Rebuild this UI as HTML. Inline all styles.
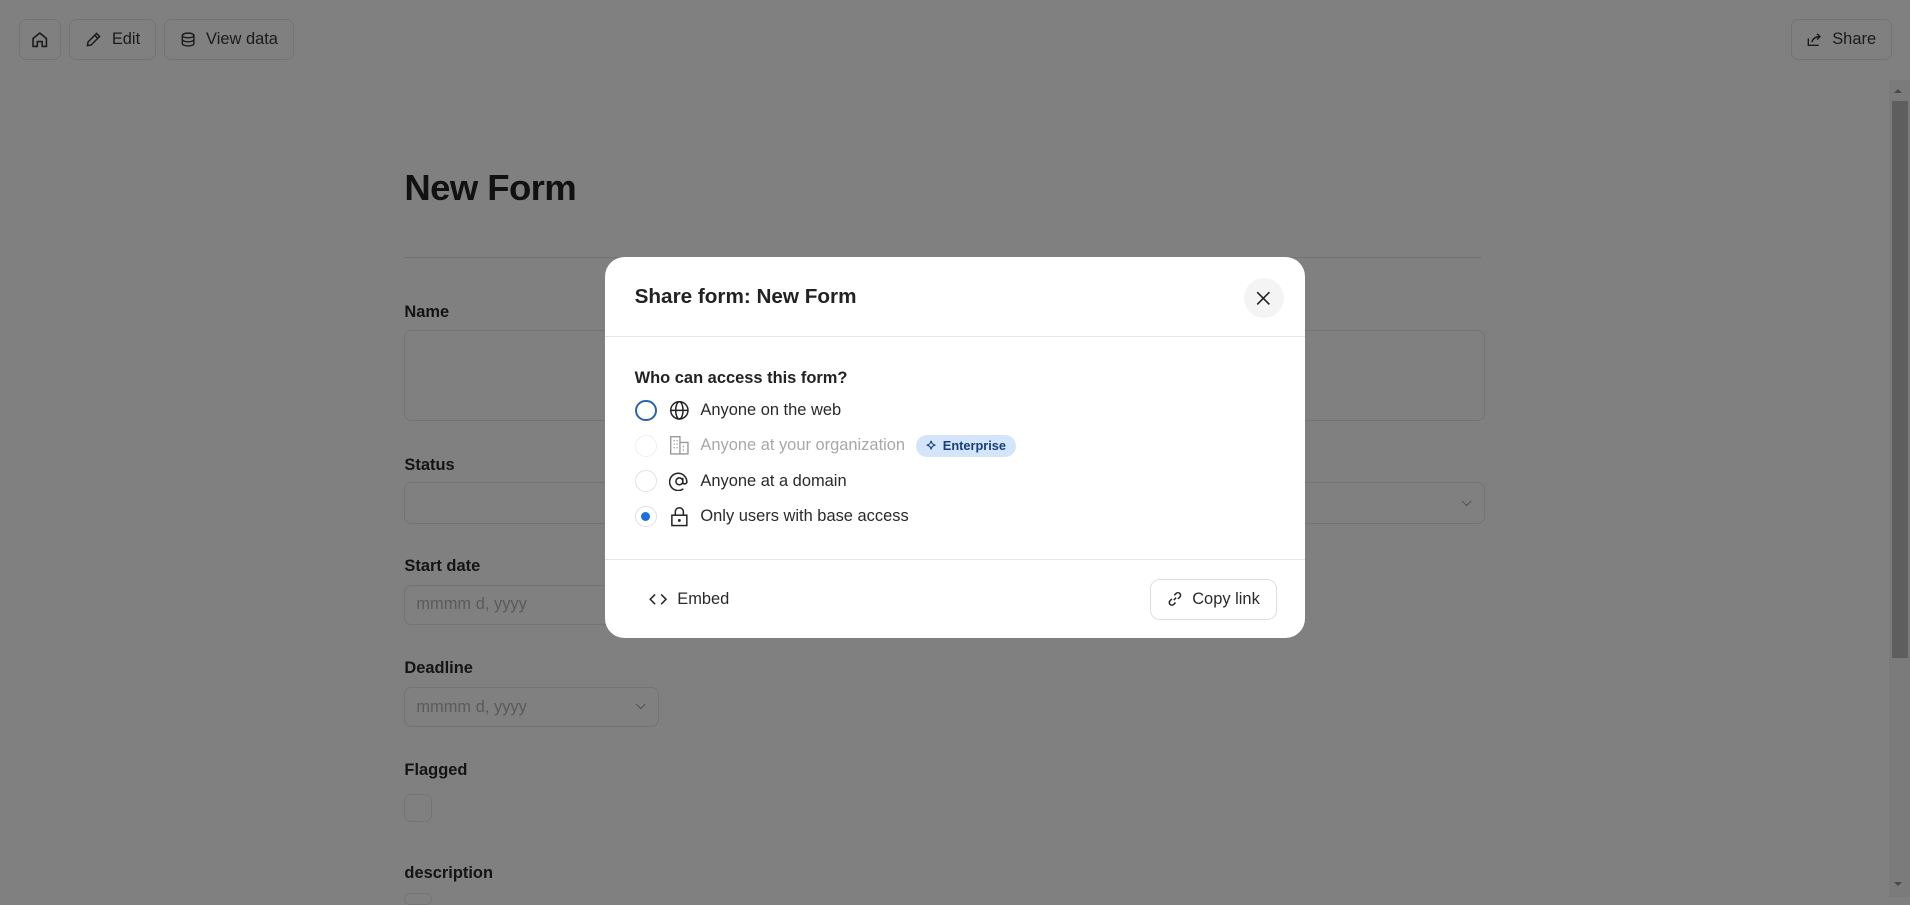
<!DOCTYPE html>
<html><head><meta charset="utf-8"><style>
html{zoom:1.21811}
*{box-sizing:border-box;margin:0;padding:0}
body{width:1568px;height:736px;overflow:hidden;background:#808080;font-family:"Liberation Sans",sans-serif;color:#141414;position:relative}
.a{position:absolute}
.btn{position:absolute;top:16px;height:33px;border:1px solid #747474;border-radius:6px;display:flex;align-items:center;gap:8px;padding:0 12px;font-size:13.5px;color:#1a1a1a;white-space:nowrap}
.lbl{position:absolute;left:332px;font-size:13.5px;font-weight:bold;color:#141414}
.inp{position:absolute;left:332px;border:1px solid #747474;border-radius:6px;font-size:13.5px;color:#5a5a5a;padding-left:9px;display:flex;align-items:center}
.modal{position:absolute;left:497px;top:211px;width:574px;height:313px;background:#fff;border-radius:16px}
.opt{position:absolute;left:24px;display:flex;align-items:center;font-size:13.5px;color:#2a2a2a;height:20px;white-space:nowrap}
.rad{width:18px;height:18px;border-radius:50%;border:1.5px solid #e1e1e1;margin-right:10px;display:flex;align-items:center;justify-content:center}
.opt svg{margin-right:9px}
</style></head><body>
<div class="btn" style="left:16px;width:34px;padding:0;justify-content:center"><svg width="16" height="16" viewBox="0 0 16 16" fill="none" stroke="#1a1a1a" stroke-width="1.3"><path d="M2.5 7L8 2.5 13.5 7v6.5h-3.5v-4h-4v4H2.5z" stroke-linejoin="round"/></svg></div>
<div class="btn" style="left:57px;width:71px"><svg width="14" height="14" viewBox="0 0 14 14" fill="none" stroke="#1a1a1a" stroke-width="1.2"><path d="M2 12l.5-3L9.5 2l2.5 2.5-7 7z M8 3.5l2.5 2.5"/></svg>Edit</div>
<div class="btn" style="left:135px;width:106px"><svg width="14" height="14" viewBox="0 0 14 14" fill="none" stroke="#1a1a1a" stroke-width="1.2"><ellipse cx="7" cy="3.5" rx="5" ry="2"/><path d="M2 3.5v7c0 1.1 2.2 2 5 2s5-.9 5-2v-7M2 7c0 1.1 2.2 2 5 2s5-.9 5-2"/></svg>View data</div>
<div class="btn" style="left:1470px;width:83px"><svg width="14" height="14" viewBox="0 0 14 14" fill="none" stroke="#1a1a1a" stroke-width="1.2"><path d="M2 6v6h9M5 9c1-3 3-4.5 7-4.5M9.5 2l2.5 2.5L9.5 7"/></svg>Share</div>
<div class="a" style="left:1551px;top:66px;width:17px;height:670px;background:#7b7b7b"></div>
<div class="a" style="left:1553px;top:83px;width:13px;height:457px;background:#5e5e5e"></div>
<div class="a" style="left:1555px;top:70px;width:0;height:0;border:4px solid transparent;border-bottom:4px solid #4a4a4a"></div>
<div class="a" style="left:1555px;top:724px;width:0;height:0;border:4px solid transparent;border-top:4px solid #4a4a4a"></div>

<div class="a" style="left:332px;top:137px;font-size:30px;font-weight:bold;color:#111;letter-spacing:-0.5px">New Form</div>
<div class="a" style="left:332px;top:211px;width:885px;height:1px;background:#747474"></div>
<div class="lbl" style="top:249px">Name</div>
<div class="inp" style="top:271px;width:887px;height:75px"></div>
<div class="lbl" style="top:374px">Status</div>
<div class="inp" style="top:396px;width:887px;height:34px"><span class="a" style="right:10px;top:9px;font-size:11px;color:#333">⌵</span></div>
<div class="lbl" style="top:457px">Start date</div>
<div class="inp" style="top:480px;width:209px;height:33px">mmmm d, yyyy</div>
<div class="lbl" style="top:541px">Deadline</div>
<div class="inp" style="top:564px;width:209px;height:33px">mmmm d, yyyy<span class="a" style="right:10px;top:7px;font-size:11px;color:#333">⌵</span></div>
<div class="lbl" style="top:625px">Flagged</div>
<div class="inp" style="top:652px;width:23px;height:23px;padding:0"></div>
<div class="lbl" style="top:709px">description</div>
<div class="inp" style="top:733px;width:23px;height:10px;padding:0"></div>

<div class="modal">
<div class="a" style="left:24px;top:23px;font-size:17px;font-weight:bold;color:#222">Share form: New Form</div>
<div class="a" style="left:524px;top:17px;width:33px;height:33px;border-radius:50%;background:#f4f4f4;display:flex;align-items:center;justify-content:center"><svg width="12" height="12" viewBox="0 0 12 12" stroke="#222" stroke-width="1.3"><path d="M1 1l10 10M11 1L1 11"/></svg></div>
<div class="a" style="left:0;top:65px;width:574px;height:1px;background:#e6e6e6"></div>
<div class="a" style="left:24px;top:92px;font-size:13.5px;font-weight:bold;color:#222">Who can access this form?</div>
<div class="opt" style="top:116px"><div class="rad" style="border:2px solid #2a63ad"></div><svg width="17" height="17" viewBox="0 0 18 18" fill="none" stroke="#222" stroke-width="1.3"><circle cx="9" cy="9" r="7.5"/><ellipse cx="9" cy="9" rx="3.2" ry="7.5"/><path d="M1.5 9h15"/></svg>Anyone on the web</div>
<div class="opt" style="top:145px;color:#a8a8a8"><div class="rad" style="border-color:#efefef"></div><svg width="17" height="17" viewBox="0 0 18 18" fill="none" stroke="#999" stroke-width="1.2"><path d="M1.5 16.5V1.5h8v15M9.5 6.5h7v10M1 16.5h16M4 5h1M6.5 5h1M4 8h1M6.5 8h1M4 11h1M6.5 11h1M12 10h1M12 13h1"/></svg>Anyone at your organization<span style="margin-left:9px;background:#d3e4fb;color:#173f7a;font-size:10.5px;font-weight:bold;border-radius:9px;padding:3px 8px 3px 7px;display:flex;align-items:center;gap:4px"><svg width="11" height="11" viewBox="0 0 11 11" fill="none" stroke="#173f7a" stroke-width="1" style="margin:0"><path d="M5 1.5c.4 2.2 1.3 3.1 3.5 3.5-2.2.4-3.1 1.3-3.5 3.5-.4-2.2-1.3-3.1-3.5-3.5 2.2-.4 3.1-1.3 3.5-3.5z"/></svg>Enterprise</span></div>
<div class="opt" style="top:174px"><div class="rad"></div><svg width="17" height="17" viewBox="0 0 18 18" fill="none" stroke="#222" stroke-width="1.3"><circle cx="9" cy="9" r="3"/><path d="M12 6v4c0 1.5 2.5 1.8 3.5 0A7.5 7.5 0 1 0 12.5 15.5"/></svg>Anyone at a domain</div>
<div class="opt" style="top:203px"><div class="rad"><div style="width:8px;height:8px;border-radius:50%;background:#1a6ee0"></div></div><svg width="17" height="17" viewBox="0 0 18 18" fill="none" stroke="#222" stroke-width="1.3"><rect x="2.5" y="8" width="13" height="9"/><path d="M5.5 8V5a3.5 3.5 0 0 1 7 0v3"/><circle cx="9" cy="12.5" r=".6" fill="#222"/></svg>Only users with base access</div>
<div class="a" style="left:0;top:248px;width:574px;height:1px;background:#e6e6e6"></div>
<div class="a" style="left:36px;top:273px;font-size:13.5px;color:#2a2a2a;display:flex;align-items:center;gap:8px"><svg width="15" height="12" viewBox="0 0 15 12" fill="none" stroke="#222" stroke-width="1.2"><path d="M5 2L1 6l4 4M10 2l4 4-4 4"/></svg>Embed</div>
<div class="a" style="left:447px;top:264px;width:104px;height:34px;border:1px solid #dedede;border-radius:8px;display:flex;align-items:center;justify-content:center;gap:8px;font-size:13.5px;color:#2a2a2a"><svg width="13" height="13" viewBox="0 0 13 13" fill="none" stroke="#222" stroke-width="1.2"><path d="M5.5 7.5l2-2M6 3.5l1.5-1.5a2.1 2.1 0 0 1 3 3L9 6.5M7 9.5L5.5 11a2.1 2.1 0 0 1-3-3L4 6.5"/></svg>Copy link</div>
</div>
</body></html>
